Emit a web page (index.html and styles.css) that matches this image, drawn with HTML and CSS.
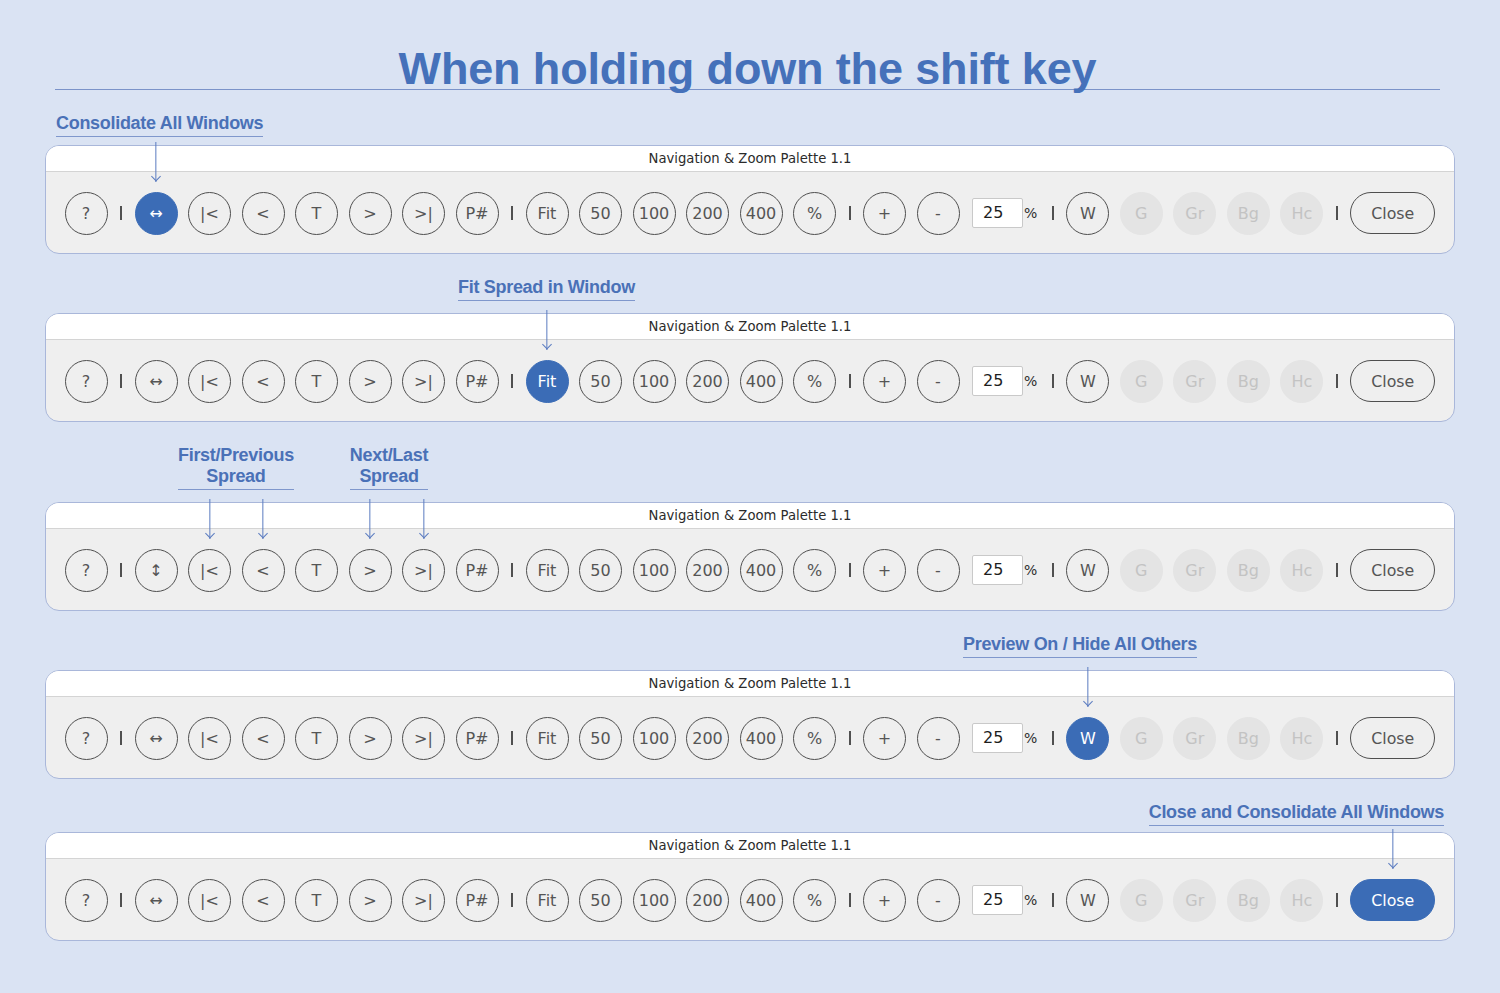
FILE: index.html
```html
<!DOCTYPE html>
<html>
<head>
<title>Navigation &amp; Zoom Palette - shift key</title>
<meta name="viewport" content="width=device-width, initial-scale=1.0">
<link rel="stylesheet" href="styles.css">
</head>
<body>

<h1 class="title">When holding down the shift key</h1>

<section class="demo">
<div class="notes tight">
<span class="note at-consolidate">Consolidate All Windows</span>
</div>
<div class="palette">
<div class="palette-head">Navigation &amp; Zoom Palette 1.1</div>
<div class="palette-body">
<span class="btn">?</span><span class="sep"></span>
<span class="btn on pointed">&#8596;</span>
<span class="btn">|&lt;</span>
<span class="btn">&lt;</span>
<span class="btn">T</span>
<span class="btn">&gt;</span>
<span class="btn">&gt;|</span>
<span class="btn">P#</span><span class="sep"></span>
<span class="btn">Fit</span>
<span class="btn">50</span>
<span class="btn">100</span>
<span class="btn">200</span>
<span class="btn">400</span>
<span class="btn">%</span><span class="sep"></span>
<span class="btn">+</span>
<span class="btn">-</span>
<span class="zoom"><span class="field">25</span>%</span><span class="sep"></span>
<span class="btn">W</span>
<span class="btn off">G</span>
<span class="btn off">Gr</span>
<span class="btn off">Bg</span>
<span class="btn off">Hc</span><span class="sep"></span>
<span class="close">Close</span>
</div>
</div>
</section>

<section class="demo">
<div class="notes">
<span class="note at-fit">Fit Spread in Window</span>
</div>
<div class="palette">
<div class="palette-head">Navigation &amp; Zoom Palette 1.1</div>
<div class="palette-body">
<span class="btn">?</span><span class="sep"></span>
<span class="btn">&#8596;</span>
<span class="btn">|&lt;</span>
<span class="btn">&lt;</span>
<span class="btn">T</span>
<span class="btn">&gt;</span>
<span class="btn">&gt;|</span>
<span class="btn">P#</span><span class="sep"></span>
<span class="btn on pointed">Fit</span>
<span class="btn">50</span>
<span class="btn">100</span>
<span class="btn">200</span>
<span class="btn">400</span>
<span class="btn">%</span><span class="sep"></span>
<span class="btn">+</span>
<span class="btn">-</span>
<span class="zoom"><span class="field">25</span>%</span><span class="sep"></span>
<span class="btn">W</span>
<span class="btn off">G</span>
<span class="btn off">Gr</span>
<span class="btn off">Bg</span>
<span class="btn off">Hc</span><span class="sep"></span>
<span class="close">Close</span>
</div>
</div>
</section>

<section class="demo">
<div class="notes">
<span class="note at-first">First/Previous<br>Spread</span>
<span class="note at-next">Next/Last<br>Spread</span>
</div>
<div class="palette">
<div class="palette-head">Navigation &amp; Zoom Palette 1.1</div>
<div class="palette-body">
<span class="btn">?</span><span class="sep"></span>
<span class="btn">&#8597;</span>
<span class="btn pointed">|&lt;</span>
<span class="btn pointed">&lt;</span>
<span class="btn">T</span>
<span class="btn pointed">&gt;</span>
<span class="btn pointed">&gt;|</span>
<span class="btn">P#</span><span class="sep"></span>
<span class="btn">Fit</span>
<span class="btn">50</span>
<span class="btn">100</span>
<span class="btn">200</span>
<span class="btn">400</span>
<span class="btn">%</span><span class="sep"></span>
<span class="btn">+</span>
<span class="btn">-</span>
<span class="zoom"><span class="field">25</span>%</span><span class="sep"></span>
<span class="btn">W</span>
<span class="btn off">G</span>
<span class="btn off">Gr</span>
<span class="btn off">Bg</span>
<span class="btn off">Hc</span><span class="sep"></span>
<span class="close">Close</span>
</div>
</div>
</section>

<section class="demo">
<div class="notes">
<span class="note at-preview">Preview On / Hide All Others</span>
</div>
<div class="palette">
<div class="palette-head">Navigation &amp; Zoom Palette 1.1</div>
<div class="palette-body">
<span class="btn">?</span><span class="sep"></span>
<span class="btn">&#8596;</span>
<span class="btn">|&lt;</span>
<span class="btn">&lt;</span>
<span class="btn">T</span>
<span class="btn">&gt;</span>
<span class="btn">&gt;|</span>
<span class="btn">P#</span><span class="sep"></span>
<span class="btn">Fit</span>
<span class="btn">50</span>
<span class="btn">100</span>
<span class="btn">200</span>
<span class="btn">400</span>
<span class="btn">%</span><span class="sep"></span>
<span class="btn">+</span>
<span class="btn">-</span>
<span class="zoom"><span class="field">25</span>%</span><span class="sep"></span>
<span class="btn on pointed">W</span>
<span class="btn off">G</span>
<span class="btn off">Gr</span>
<span class="btn off">Bg</span>
<span class="btn off">Hc</span><span class="sep"></span>
<span class="close">Close</span>
</div>
</div>
</section>

<section class="demo">
<div class="notes tighter right">
<span class="note">Close and Consolidate All Windows</span>
</div>
<div class="palette">
<div class="palette-head">Navigation &amp; Zoom Palette 1.1</div>
<div class="palette-body">
<span class="btn">?</span><span class="sep"></span>
<span class="btn">&#8596;</span>
<span class="btn">|&lt;</span>
<span class="btn">&lt;</span>
<span class="btn">T</span>
<span class="btn">&gt;</span>
<span class="btn">&gt;|</span>
<span class="btn">P#</span><span class="sep"></span>
<span class="btn">Fit</span>
<span class="btn">50</span>
<span class="btn">100</span>
<span class="btn">200</span>
<span class="btn">400</span>
<span class="btn">%</span><span class="sep"></span>
<span class="btn">+</span>
<span class="btn">-</span>
<span class="zoom"><span class="field">25</span>%</span><span class="sep"></span>
<span class="btn">W</span>
<span class="btn off">G</span>
<span class="btn off">Gr</span>
<span class="btn off">Bg</span>
<span class="btn off">Hc</span><span class="sep"></span>
<span class="close on pointed">Close</span>
</div>
</div>
</section>

</body>
</html>
```

FILE: styles.css
```css
body {
   background-color: #dae3f3;
   font-family: 'Liberation Sans', Arial, sans-serif;
   margin: 0;
   padding-bottom: 40px;}

.title {
   border-bottom: 1px solid #7b93c9;
   color: #4571ba;
   font-size: 45px;
   letter-spacing: -0.15px;
   line-height: 41px;
   margin: 48px 60px 0 55px;
   text-align: center;}

/* one palette with its callout */
.demo {
   margin: 23px 45px 0 45px;}

.notes {
   display: flex;
   align-items: flex-end;
   margin-bottom: 12px;}

.notes.tight {
   margin-bottom: 8px;}

.notes.tighter {
   margin-bottom: 6px;}

.notes.right {
   justify-content: flex-end;
   padding-right: 11px;}

.note {
   border-bottom: 1px solid #7f97cc;
   color: #4a71b7;
   font-size: 18px;
   font-weight: bold;
   letter-spacing: -0.3px;
   line-height: 21px;
   padding-bottom: 2px;
   text-align: center;}

.at-consolidate { margin-left: 11px;}
.at-fit { margin-left: 413px;}
.at-first { margin-left: 133px;}
.at-next { margin-left: 56px;}
.at-preview { margin-left: 918px;}

/* the palette window */
.palette {
   background-color: #efefef;
   border: 1px solid #a9b7da;
   border-radius: 14px;
   font-family: 'DejaVu Sans', Verdana, sans-serif;}

.palette-head {
   background-color: #fff;
   border-bottom: 1px solid #d4d4d4;
   border-radius: 13px 13px 0 0;
   color: #2b2b2b;
   font-size: 13.2px;
   line-height: 25px;
   text-align: center;}

.palette-body {
   display: flex;
   align-items: center;
   gap: 10.5px;
   padding: 1px 19px 0 18.5px;
   height: 80px;}

.btn, .close {
   border: 1.5px solid #4f4f4f;
   border-radius: 50%;
   box-sizing: border-box;
   color: #555;
   display: flex;
   align-items: center;
   justify-content: center;
   flex: none;
   font-size: 16px;
   position: relative;
   height: 43px; width: 43px;}

.close {
   border-radius: 21px;
   font-size: 15.8px;
   padding-top: 1px;
   height: 42px; width: 85px;}

.btn.on, .close.on {
   background-color: #3b6cb6;
   border-color: #3b6cb6;
   color: #fff;}

.btn.off {
   background-color: #e4e4e4;
   border-color: #e4e4e4;
   color: #c3c3c3;}

.sep {
   background-color: #505050;
   flex: none;
   margin: 0 2px;
   height: 14px; width: 2px;}

.zoom {
   color: #2e2e2e;
   display: flex;
   align-items: center;
   font-size: 14px;
   gap: 1px;
   margin: 0 2px;}

.field {
   background-color: #fff;
   border: 1px solid #c9c9c9;
   border-radius: 2px;
   box-sizing: border-box;
   color: #1e1e1e;
   font-size: 16px;
   line-height: 28px;
   padding-left: 10px;
   height: 30px; width: 51px;}

/* callout arrows pointing down at a button */
.pointed::before {
   background-color: #5b7cc1;
   bottom: calc(100% + 11px);
   content: '';
   left: 50%;
   position: absolute;
   transform: translateX(-50%);
   height: 40px; width: 1.3px;}

.pointed::after {
   border-bottom: 1.3px solid #5b7cc1;
   border-right: 1.3px solid #5b7cc1;
   bottom: calc(100% + 13px);
   content: '';
   left: 50%;
   position: absolute;
   transform: translateX(-50%) rotate(45deg);
   height: 6px; width: 6px;}
```
